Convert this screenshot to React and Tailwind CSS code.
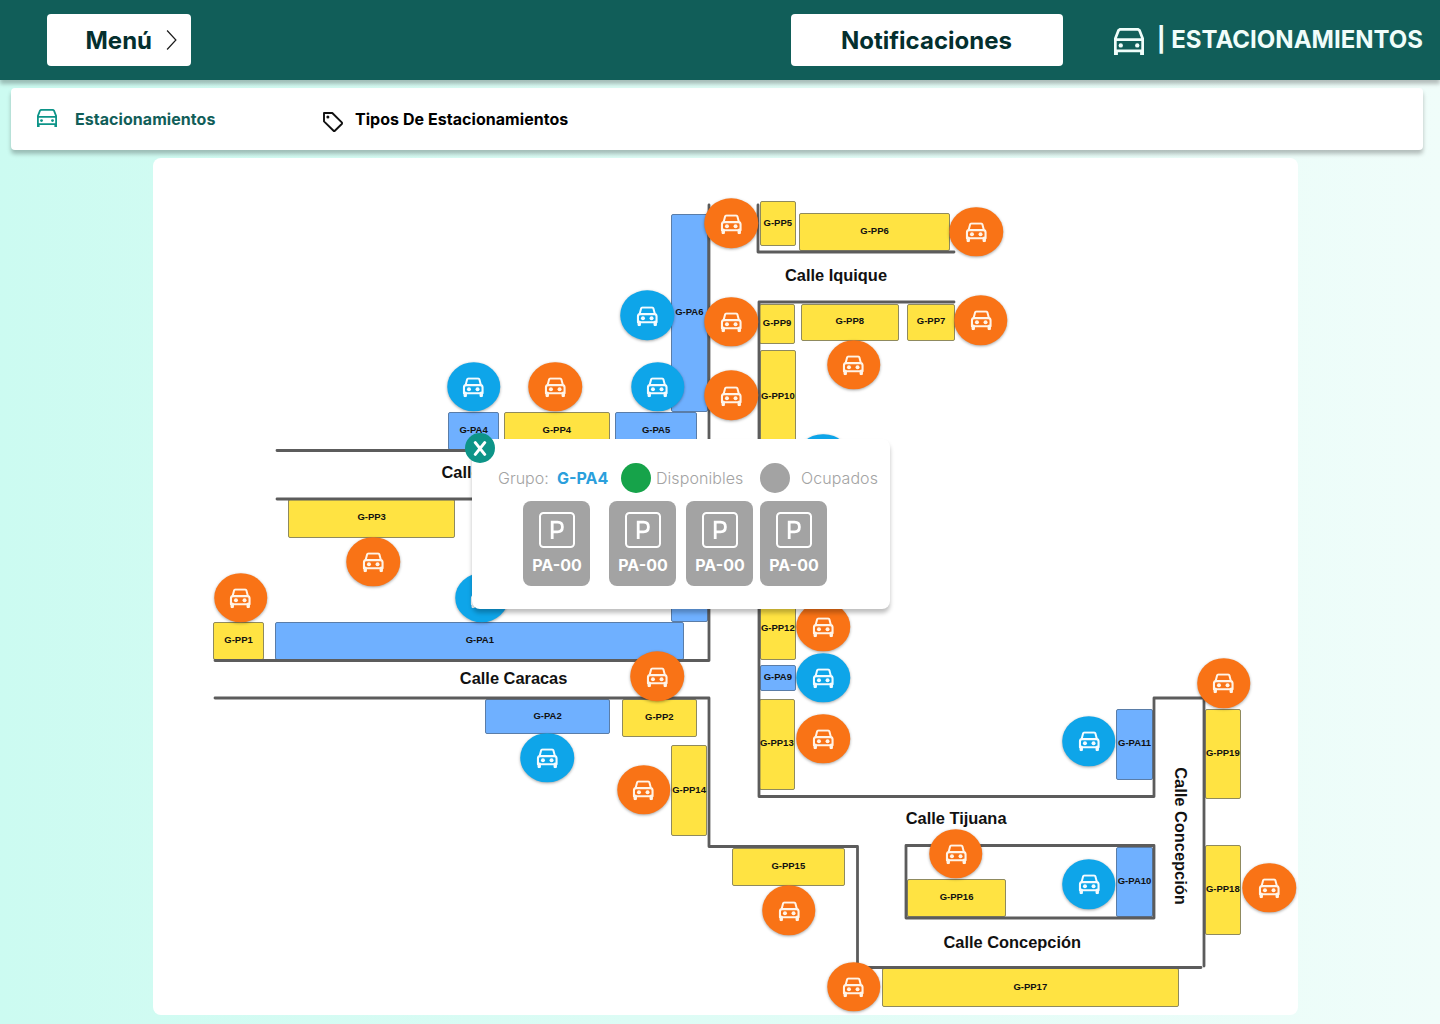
import React from "react";

const MAP_X = 153.2;
const MAP_Y = 158.1;

// Parking groups: name, left, top, right, bottom, label centre y
const GROUPS = [
  ["G-PA6", 671, 214, 708, 412, 312],
  ["G-PA4", 448.5, 412, 499, 450, 430],
  ["G-PP4", 504, 412, 610, 450, 430],
  ["G-PA5", 615.5, 412, 697, 450, 430],
  ["G-PP5", 760, 201.5, 796, 246, 223],
  ["G-PP6", 799, 213, 950.5, 251, 231],
  ["G-PP9", 759.5, 304, 795, 344.5, 323],
  ["G-PP8", 801, 304, 899, 341.5, 321.5],
  ["G-PP7", 907, 304, 955.5, 341.5, 321.5],
  ["G-PP10", 760, 350, 796, 448, 395.7],
  ["G-PP3", 288, 499.5, 455.7, 537.7, 517.5],
  ["G-PP1", 213.5, 622, 264, 660, 640],
  ["", 671, 530, 708, 622, 575],
  ["G-PA1", 275.5, 622, 684.5, 660, 640.3],
  ["G-PA2", 485.5, 699, 610, 734, 715.7],
  ["G-PP2", 622, 699, 697, 737, 717.5],
  ["G-PP14", 671, 745.5, 707.5, 836, 789.8],
  ["G-PP12", 760, 570, 796, 660, 627.7],
  ["G-PA9", 760, 665, 796, 690.7, 677],
  ["G-PP13", 759, 699, 795, 790, 743.5],
  ["G-PP15", 732, 848, 845, 885.7, 866],
  ["G-PP16", 907.5, 879, 1006, 917, 897],
  ["G-PA10", 1116.5, 846.7, 1153, 917, 881],
  ["G-PA11", 1116.5, 709.5, 1153, 779.7, 743.5],
  ["G-PP19", 1205, 709, 1241, 799, 753],
  ["G-PP18", 1205, 845, 1241, 935, 889],
  ["G-PP17", 882, 968.5, 1179, 1006.7, 987],
];

const ROADS = [
  "M709 205V450.5H277",
  "M277 499H709V660.5H215",
  "M215 698H709V846.5H857.5V967.5H1201",
  "M1204 966V698H1154V796.5H759V302H954",
  "M758 205V252H954",
  "M906 845.5H1154V918H906Z",
];

const STREETS = [
  ["Calle Iquique", 836.2, 275],
  ["Calle Caracas", 513.8, 678.5],
  ["Calle Tijuana", 956.3, 818.5],
  ["Calle Concepción", 1012.5, 942],
  ["Calle", 461.3, 472.5],
];

const PINS = [
  ["o", 731.5, 223.5],
  ["o", 976.5, 232],
  ["o", 981, 320.3],
  ["o", 731.5, 322],
  ["o", 731.5, 395.5],
  ["o", 853.8, 365],
  ["o", 555.3, 387],
  ["o", 373.6, 562],
  ["o", 240.7, 598],
  ["o", 657.5, 676.5],
  ["o", 643.7, 790],
  ["o", 789, 910.5],
  ["o", 853.8, 986.8],
  ["o", 956, 853.7],
  ["o", 823.5, 626.7],
  ["o", 823.5, 739],
  ["o", 1223.9, 683.2],
  ["o", 1269.4, 888],
  ["b", 647.2, 315.5],
  ["b", 473.9, 387],
  ["b", 657.7, 387],
  ["b", 481.7, 598],
  ["b", 823.3, 459],
  ["b", 547.5, 758],
  ["b", 823.5, 677.8],
  ["b", 1089, 741.2],
  ["b", 1089, 884.2],
];

function CarIcon({ className }) {
  return (
    <svg viewBox="0 0 20 18" className={className} fill="none" stroke="currentColor">
      <path d="M0.9 18V7L3 1.6L4 0.9H16L17 1.6L19.1 7V18M0.9 7.8H19.1M0.9 15.2H19.1" strokeWidth="1.8" />
      <path d="M1.3 15V18M18.7 15V18" strokeWidth="2.6" />
      <circle cx="4.5" cy="11.6" r="1.45" fill="currentColor" stroke="none" />
      <circle cx="15.5" cy="11.6" r="1.45" fill="currentColor" stroke="none" />
    </svg>
  );
}

function PinCar() {
  return (
    <svg viewBox="0 0 22 20" className="mt-px h-5 w-[22px]" fill="none" stroke="currentColor">
      <path
        d="M3.3 8L4.9 2.1Q5.2 1.2 6.1 1.2H15.9Q16.8 1.2 17.1 2.1L18.7 8"
        strokeWidth="2"
        strokeLinejoin="round"
      />
      <path d="M1.7 16V10.2Q1.7 7.9 4 7.9H18Q20.3 7.9 20.3 10.2V16Z" strokeWidth="2.1" strokeLinejoin="round" />
      <path d="M3 16V18.4M19 16V18.4" strokeWidth="3.4" strokeLinecap="round" />
      <circle cx="6.7" cy="12" r="2" fill="currentColor" stroke="none" />
      <circle cx="15.3" cy="12" r="2" fill="currentColor" stroke="none" />
    </svg>
  );
}

function Header() {
  return (
    <header className="relative z-10 flex h-20 items-center bg-[#115e59] pl-[47px] pr-[17px] shadow-[0_4px_4px_rgba(0,0,0,0.25)]">
      <button className="flex h-[52px] w-36 items-center rounded bg-white pl-[38.5px] text-2xl font-bold text-[#042f2e]">
        <span className="w-[80.5px] pt-0.5 text-left">Menú</span>
        <svg viewBox="0 0 10 20" className="h-5 w-[11px]" fill="none" stroke="#1c1c1c" strokeWidth="1.2">
          <path d="M0.6 0.5L9.4 10L0.6 19.5" />
        </svg>
      </button>
      <button className="ml-[600px] h-[52px] w-[272px] rounded bg-white pr-px pt-0.5 text-2xl font-bold text-[#042f2e]">
        Notificaciones
      </button>
      <CarIcon className="ml-[51px] mt-[3px] h-[27px] w-[30px] shrink-0 text-[#f0fdfa]" />
      <h1 className="ml-auto whitespace-nowrap text-2xl font-bold text-[#f0fdfa]">| ESTACIONAMIENTOS</h1>
    </header>
  );
}

function Tabs() {
  return (
    <nav className="ml-[11px] mt-2 flex h-[62px] w-[1412px] items-center rounded bg-white pl-[26px] font-bold shadow-[0_4px_4px_rgba(0,0,0,0.25)]">
      <CarIcon className="mb-[2px] h-[18px] w-5 text-[#0d9488]" />
      <span className="ml-[18px] w-[248px] tracking-[0.003em] text-[#115e59]">Estacionamientos</span>
      <svg viewBox="0 0 20 20" className="mt-1.5 h-5 w-5" fill="none" stroke="#111" strokeWidth="1.9" strokeLinejoin="round">
        <path d="M1 1H9.3L19 10.7V11.7L11.6 19H10.8L1 9.4Z" />
        <circle cx="4.9" cy="4.9" r="1.5" fill="#111" stroke="none" />
      </svg>
      <span className="ml-3 tracking-[0.003em] text-black">Tipos De Estacionamientos</span>
    </nav>
  );
}

function ParkingMap() {
  return (
    <section className="relative ml-[153px] mt-2 h-[857px] w-[1145px] rounded-lg bg-white font-['Liberation_Sans',Arial,sans-serif] font-bold text-[#111]">
      {GROUPS.map(([name, l, t, r, b]) => (
        <div
          key={l + "-" + t}
          className={
            "absolute rounded-[2px] border " +
            (name.startsWith("G-PP") ? "border-[#8f8a5e] bg-[#ffe342]" : "border-[#5a7da8] bg-[#6fb0ff]")
          }
          style={{ left: l - MAP_X, top: t - MAP_Y, width: r - l, height: b - t }}
        />
      ))}
      <svg viewBox="153 158 1145 857" className="absolute inset-0 h-full w-full" fill="none" stroke="#5c5c5c" strokeWidth="2.8" strokeLinejoin="round" strokeLinecap="round">
        {ROADS.map((d) => (
          <path key={d} d={d} />
        ))}
      </svg>
      {PINS.map(([kind, x, y]) => (
        <div
          key={x + "-" + y}
          className={
            "absolute flex h-[49.5px] w-[53.5px] -translate-x-1/2 -translate-y-1/2 items-center justify-center rounded-[50%] shadow-[0_1px_3px_rgba(0,0,0,0.35)] " +
            (kind === "o" ? "bg-[#f97316] text-[#fff4e8]" : "bg-[#0ea5e9] text-[#f4fbff]")
          }
          style={{ left: x - MAP_X, top: y - MAP_Y }}
        >
          <PinCar />
        </div>
      ))}
      {GROUPS.filter(([name]) => name).map(([name, l, , r, , y]) => (
        <span
          key={name}
          className="absolute -translate-x-1/2 -translate-y-1/2 whitespace-nowrap text-[9.5px] leading-none"
          style={{ left: (l + r) / 2 - MAP_X, top: y - MAP_Y }}
        >
          {name}
        </span>
      ))}
      {STREETS.map(([name, x, y]) => (
        <span
          key={name}
          className="absolute -translate-x-1/2 -translate-y-1/2 whitespace-nowrap text-[16.4px] leading-none"
          style={{ left: x - MAP_X, top: y - MAP_Y }}
        >
          {name}
        </span>
      ))}
      <span className="absolute left-[1028px] top-[678px] -translate-x-1/2 -translate-y-1/2 rotate-90 whitespace-nowrap text-[16.4px] leading-none">
        Calle Concepción
      </span>
      <GroupPopup />
    </section>
  );
}

function Spot({ className }) {
  return (
    <div className={"flex h-[85px] w-[67px] flex-col items-center rounded-lg bg-[#a3a3a3] pt-[11px] text-white " + className}>
      <svg viewBox="0 0 36 36" className="h-9 w-9" fill="none" stroke="currentColor">
        <rect x="1" y="1" width="34" height="34" rx="3.5" strokeWidth="2" />
        <path d="M13.2 27V10.2H18.6Q23.4 10.2 23.4 15T18.6 19.8H13.2" strokeWidth="2.8" />
      </svg>
      <span className="ml-px mt-[5px] font-bold leading-6">PA-00</span>
    </div>
  );
}

function GroupPopup() {
  return (
    <div className="absolute left-[319px] top-[281px] h-[170px] w-[418px] rounded-lg rounded-tl-none bg-white pt-6 font-[Inter,sans-serif] font-light text-[#a3a3a3] shadow-[0_4px_4px_rgba(0,0,0,0.25)]">
      <button className="absolute -left-[7px] -top-1.5 flex h-[30px] w-[30px] items-center justify-center rounded-full bg-[#0d9488]">
        <svg viewBox="0 0 14 15" className="h-[15px] w-[14px]" fill="none" stroke="#fff" strokeWidth="3" strokeLinecap="round">
          <path d="M2.3 1.6L11.7 13.4M11.7 1.6L2.3 13.4" />
        </svg>
      </button>
      <div className="flex h-[30px] items-center pl-[26px]">
        <span className="w-[59px]">Grupo:</span>
        <span className="w-16 font-bold text-[#2b9fdc]">G-PA4</span>
        <span className="h-[30px] w-[30px] rounded-full bg-[#16a34a]" />
        <span className="ml-[5px] w-[104px] tracking-[0.004em]">Disponibles</span>
        <span className="h-[30px] w-[30px] rounded-full bg-[#a3a3a3]" />
        <span className="ml-[11px] tracking-[0.004em]">Ocupados</span>
      </div>
      <div className="mt-2 flex pl-[51px]">
        <Spot className="mr-[19px]" />
        <Spot className="mr-2.5" />
        <Spot className="mr-[7px]" />
        <Spot className="" />
      </div>
    </div>
  );
}

export default function App() {
  return (
    <div className="h-[1024px] w-[1440px] overflow-hidden bg-gradient-to-r from-[#ccfbf1] to-[#f0fdfa] font-[Inter,sans-serif]">
      <Header />
      <Tabs />
      <ParkingMap />
    </div>
  );
}
